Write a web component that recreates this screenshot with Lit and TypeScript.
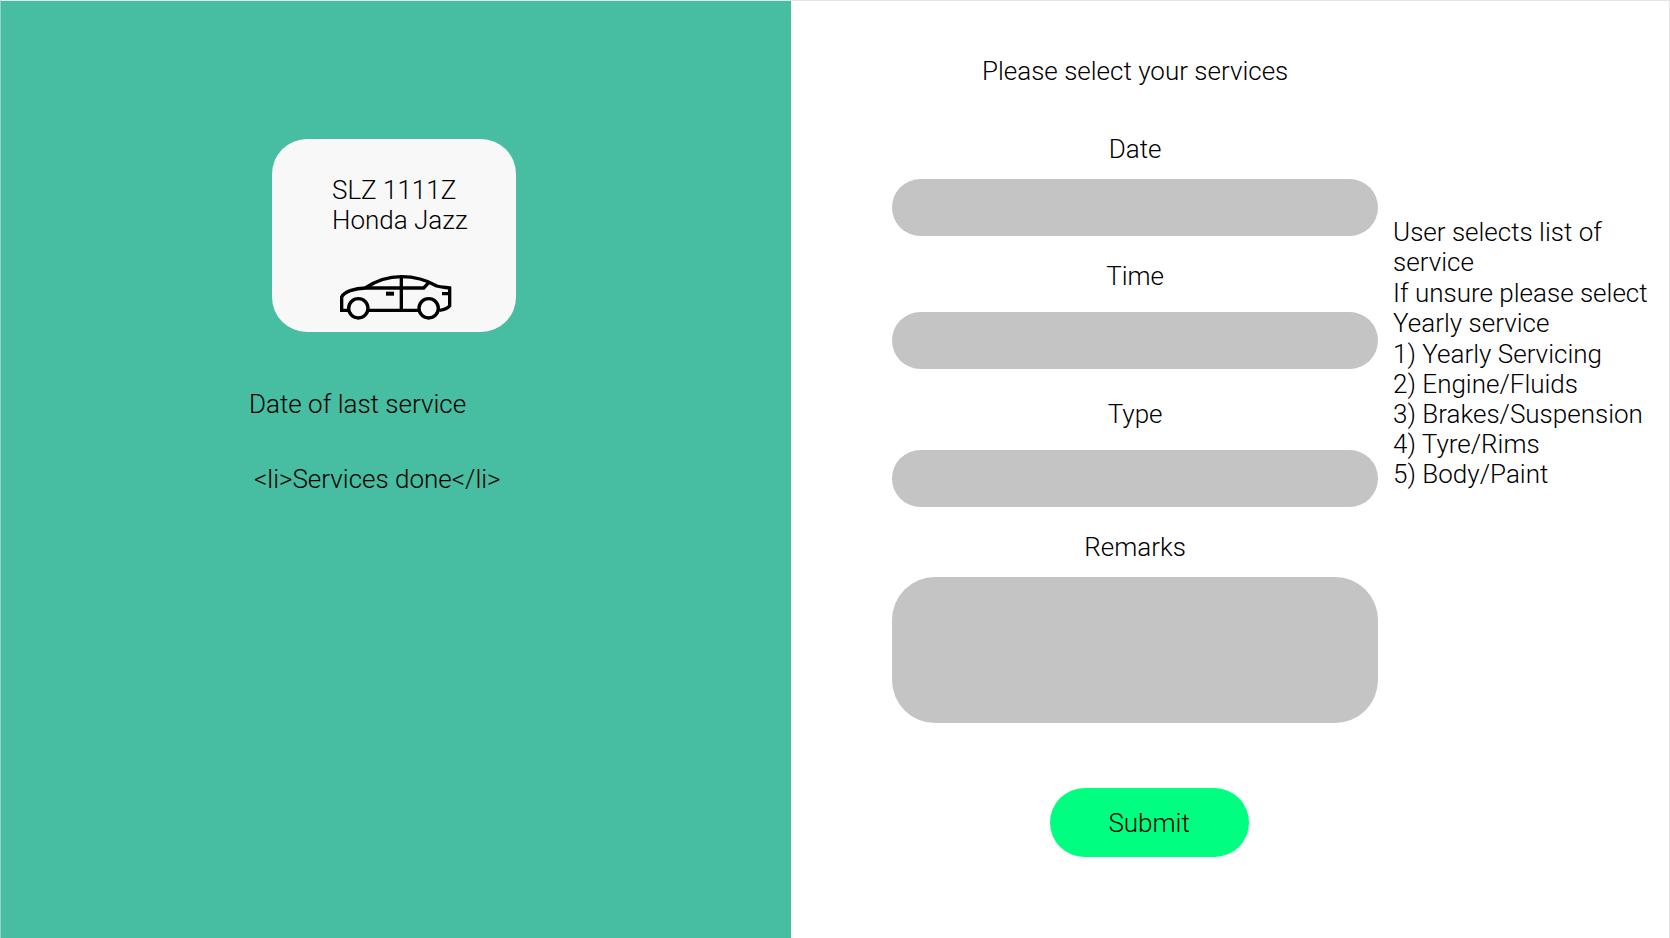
import { LitElement, html, css, svg } from "lit";
import { customElement } from "lit/decorators.js";

const car = svg`
  <g fill="none" stroke="#000" stroke-width="10">
    <path d="M56 137H35V97C42 82 72 70 108 70H281L297 53" />
    <path d="M106 70C140 47 175 36 214 36C256 36 290 46 320 64C332 67 345 68 359 70V123C352 132 344 135 328 137" />
    <path d="M114 137H267M214 36V137M336 87H359" />
    <circle cx="85" cy="131" r="29" />
    <circle cx="296" cy="131" r="29" />
  </g>
  <rect x="168" y="81" width="24" height="12" />
`;

@customElement("vehicle-panel")
export class VehiclePanel extends LitElement {
  static styles = css`
    :host {
      display: block;
      background: #47bda1;
      padding: 138px 24px 24px 248px;
      box-sizing: border-box;
    }
    .card {
      width: 244px;
      box-sizing: border-box;
      margin: 0 0 57px 23px;
      padding: 36px 24px 12px 60px;
      border-radius: 35px;
      background: #f8f8f8;
    }
    .vehicle {
      margin: 0;
    }
    .car {
      display: block;
      width: 112px;
      height: 46px;
      margin: 39px 0 0 8px;
    }
    .line {
      margin: 0 0 45px;
    }
    .services {
      margin: 0;
      padding-left: 5px;
    }
  `;
  render() {
    return html`
      <section class="card">
        <p class="vehicle">SLZ 1111Z<br />Honda Jazz</p>
        <svg class="car" viewBox="30 28 336 138" role="img" aria-label="Car">${car}</svg>
      </section>
      <p class="line">Date of last service</p>
      <p class="services">&lt;li&gt;Services done&lt;/li&gt;</p>
    `;
  }
}

@customElement("booking-form")
export class BookingForm extends LitElement {
  static styles = css`
    :host {
      display: grid;
      grid-template-columns: minmax(0, 486px) minmax(0, 1fr);
      column-gap: 15px;
      align-items: start;
      padding: 55px 12px 24px 101px;
      box-sizing: border-box;
      background: #fff;
    }
    .form {
      display: flex;
      flex-direction: column;
    }
    .title {
      margin: 0 0 48px;
      font: inherit;
      text-align: center;
    }
    .field {
      display: flex;
      flex-direction: column;
      align-items: center;
      gap: 15px;
      margin-bottom: 25px;
    }
    .spaced {
      gap: 21px;
    }
    .wide {
      margin-bottom: 30px;
    }
    .control {
      display: block;
      appearance: none;
      width: 100%;
      height: 57px;
      box-sizing: border-box;
      margin: 0;
      padding: 0 28px;
      border: 0;
      border-radius: 29px;
      background: #c4c4c4;
      color: #000;
      font: inherit;
    }
    .area {
      height: 146px;
      padding: 24px 28px;
      border-radius: 43px;
      resize: none;
    }
    .actions {
      display: flex;
      justify-content: center;
      padding: 40px 0 0 28px;
    }
    .submit {
      width: 199px;
      height: 69px;
      padding: 0;
      border: 0;
      border-radius: 35px;
      background: #00ff80;
      color: #000;
      font: inherit;
      cursor: pointer;
    }
    .notes {
      display: flex;
      flex-direction: column;
      gap: 1px;
      padding-top: 161px;
    }
    .note {
      margin: 0;
    }
    .options {
      margin: 0;
      padding: 0;
      list-style: none;
    }
  `;
  render() {
    const options = ["Yearly Servicing", "Engine/Fluids", "Brakes/Suspension", "Tyre/Rims", "Body/Paint"];
    return html`
      <form class="form" @submit=${(e: Event) => e.preventDefault()}>
        <h1 class="title">Please select your services</h1>
        <div class="field">
          <label for="date">Date</label>
          <input class="control" id="date" type="text" />
        </div>
        <div class="field spaced wide">
          <label for="time">Time</label>
          <input class="control" id="time" type="text" />
        </div>
        <div class="field spaced">
          <label for="type">Type</label>
          <input class="control" id="type" type="text" />
        </div>
        <div class="field">
          <label for="remarks">Remarks</label>
          <textarea class="control area" id="remarks"></textarea>
        </div>
        <div class="actions"><button class="submit" type="submit">Submit</button></div>
      </form>
      <aside class="notes">
        <p class="note">User selects list of service</p>
        <p class="note">If unsure please select Yearly service</p>
        <ol class="options">
          ${options.map((name, i) => html`<li>${i + 1}) ${name}</li>`)}
        </ol>
      </aside>
    `;
  }
}

@customElement("app-root")
export class AppRoot extends LitElement {
  static styles = css`
    :host {
      display: grid;
      grid-template-columns: 9fr 10fr;
      min-height: 100vh;
      box-sizing: border-box;
      border-top: 1px solid #e5e5e5;
      border-right: 1px solid #e5e5e5;
      border-left: 1px solid #96d1c1;
      background: #fff;
      color: #000;
      font: 300 26px/30px Roboto, sans-serif;
    }
  `;
  render() {
    return html`<vehicle-panel></vehicle-panel><booking-form></booking-form>`;
  }
}
